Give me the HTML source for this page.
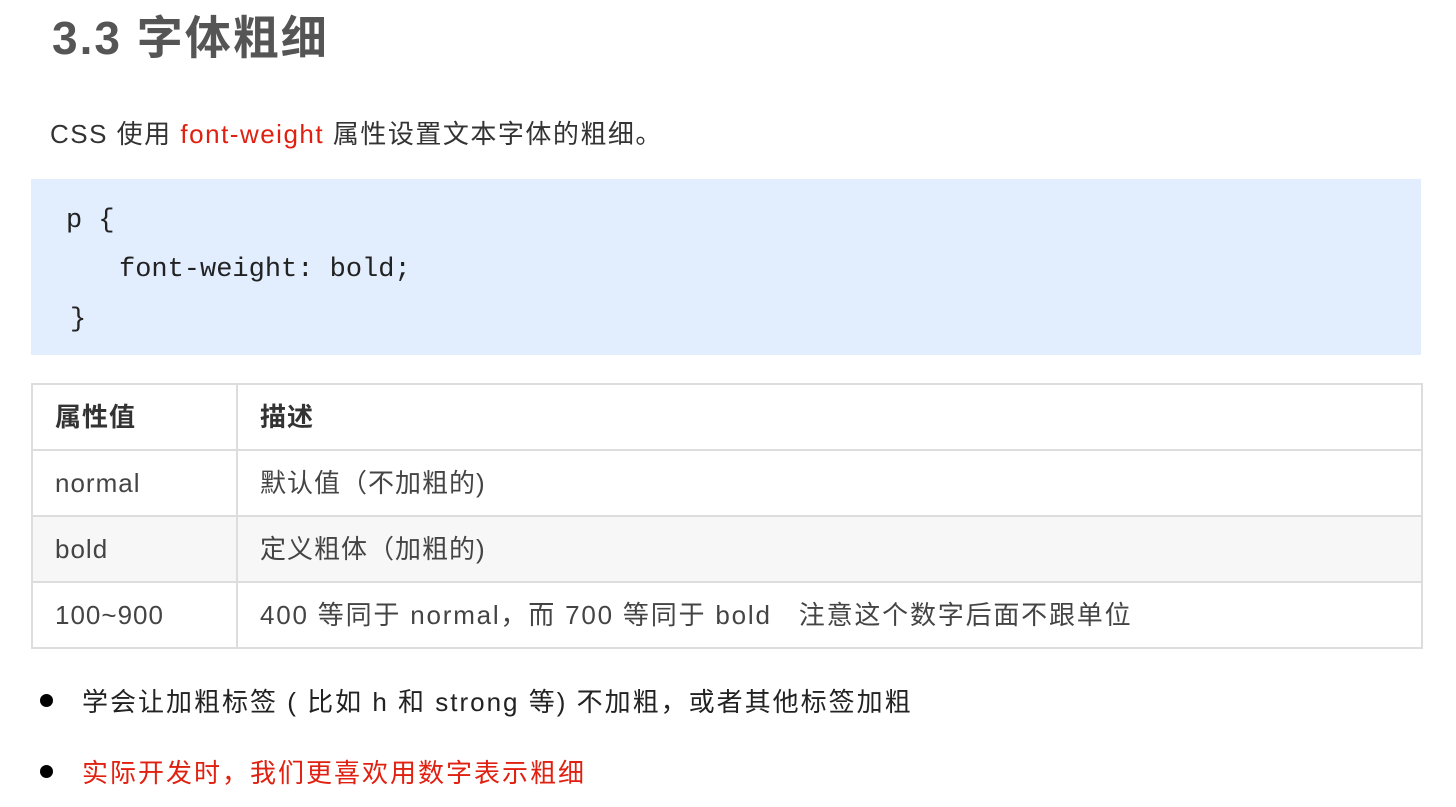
<!DOCTYPE html>
<html><head><meta charset="utf-8"><style>
body{margin:0;width:1456px;height:807px;background:#fff;overflow:hidden;position:relative;font-family:"Liberation Sans","Noto Sans CJK SC",sans-serif;color:#333}
.a{position:absolute;white-space:nowrap}
h1{position:absolute;left:52px;top:8px;margin:0;font-size:46px;font-weight:bold;color:#555;line-height:60px;letter-spacing:2px}
.code{position:absolute;left:31px;top:179px;width:1390px;height:176px;background:#e2edfd}
.m{font-family:"Liberation Mono",monospace;font-size:27px;color:#222}
table{position:absolute;left:31px;top:383px;width:1392px;border-collapse:collapse;font-size:26px;color:#444;letter-spacing:1px}
td{border:2px solid #ddd;height:64px;padding:0 0 0 22px;vertical-align:middle;line-height:30px}
tr:nth-child(3) td{background:#f7f7f7}
.dot{position:absolute;width:13px;height:13px;border-radius:50%;background:#000}
.t{font-size:26px;letter-spacing:2px}
</style></head><body>
<h1>3.3 字体粗细</h1>
<div class="a t" style="left:50px;top:114px;color:#333;letter-spacing:1.5px">CSS 使用 <span style="color:#e02010">font-weight</span> 属性设置文本字体的粗细。</div>
<div class="code"></div>
<div class="a m" style="left:66px;top:206px">p {</div>
<div class="a m" style="left:119px;top:255px">font-weight: bold;</div>
<div class="a m" style="left:70px;top:305px">}</div>
<table>
<tr><td style="width:181px;font-weight:bold;color:#333">属性值</td><td style="font-weight:bold;color:#333">描述</td></tr>
<tr><td>normal</td><td>默认值（不加粗的)</td></tr>
<tr><td>bold</td><td>定义粗体（加粗的)</td></tr>
<tr><td>100~900</td><td style="letter-spacing:1.8px">400 等同于 normal，而 700 等同于 bold&nbsp;&nbsp;&nbsp;注意这个数字后面不跟单位</td></tr>
</table>
<div class="dot" style="left:40px;top:694px"></div>
<div class="a t" style="left:82px;top:682px;color:#222">学会让加粗标签 ( 比如 h 和 strong 等) 不加粗，或者其他标签加粗</div>
<div class="dot" style="left:40px;top:765px"></div>
<div class="a t" style="left:82px;top:753px;color:#e02010">实际开发时，我们更喜欢用数字表示粗细</div>
</body></html>
